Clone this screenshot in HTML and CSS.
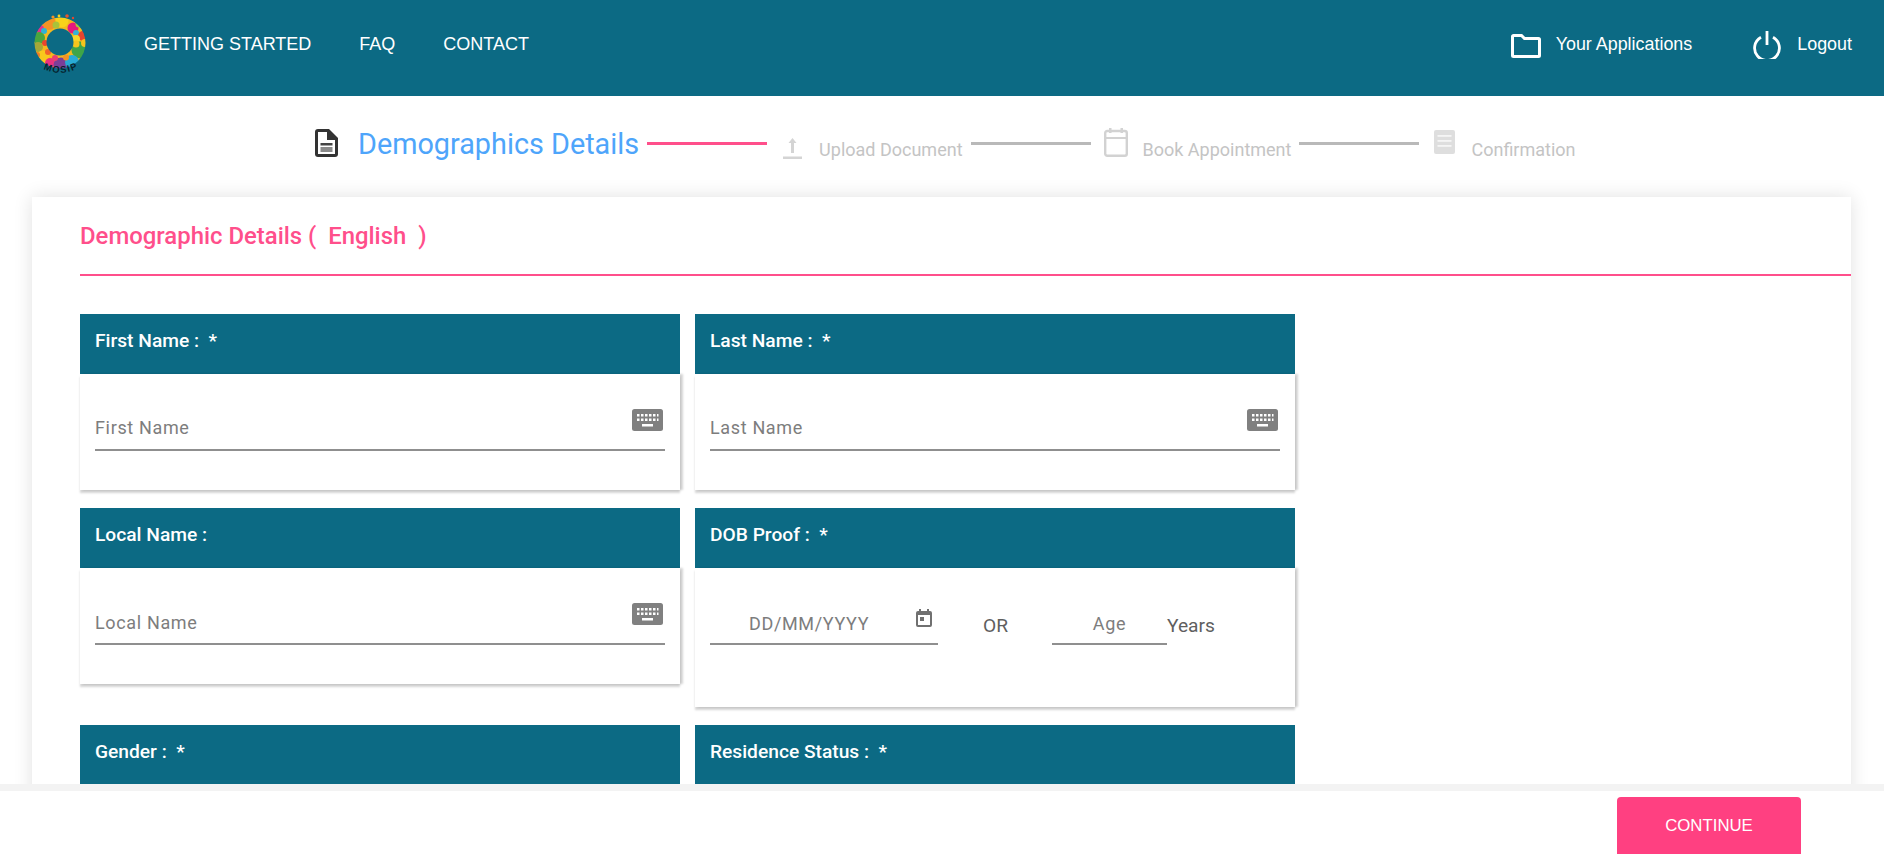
FILE: index.html
```html
<!DOCTYPE html>
<html lang="en">
<head>
<meta charset="utf-8">
<title>Demographic Details</title>
<link rel="stylesheet" href="styles.css">
</head>
<body>
<div class="app">
  <header class="topbar">
    <svg class="logo" width="60" height="66" viewBox="0 0 60 66" aria-label="MOSIP logo">
      <defs>
        <mask id="ring"><rect width="60" height="66" fill="#000"/><circle cx="30" cy="29" r="25.500" fill="#fff"/><circle cx="30" cy="28" r="13.500" fill="#000"/></mask>
        <path id="arc" d="M6 51 Q30 67 56 50"/>
      </defs>
      <g mask="url(#ring)">
        <circle cx="30" cy="29" r="26" fill="#f4b81f"/>
        <circle cx="19" cy="9" r="7" fill="#f39325"/>
        <circle cx="32" cy="7" r="6.500" fill="#f8d21a"/>
        <circle cx="26" cy="11" r="3.500" fill="#a9c23a"/>
        <circle cx="10" cy="15" r="4" fill="#e6318a"/>
        <circle cx="14" cy="17" r="3" fill="#2fb3d4"/>
        <circle cx="43" cy="14" r="5.500" fill="#e5197e"/>
        <circle cx="49" cy="10" r="3.500" fill="#9ccb3b"/>
        <circle cx="46" cy="19" r="3" fill="#35b4d6"/>
        <circle cx="53" cy="22" r="5" fill="#e8452e"/>
        <circle cx="46" cy="25" r="4" fill="#f7d82b"/>
        <circle cx="9" cy="24" r="6" fill="#4aa63f"/>
        <circle cx="15" cy="29" r="3" fill="#e8452e"/>
        <circle cx="8" cy="33" r="5" fill="#a5a738"/>
        <circle cx="50" cy="36" r="8.500" fill="#3fa548"/>
        <circle cx="46" cy="30" r="3.500" fill="#f6c51c"/>
        <circle cx="55" cy="29" r="4" fill="#f6c51c"/>
        <circle cx="13" cy="43" r="6.500" fill="#f8c81c"/>
        <circle cx="18" cy="38" r="3" fill="#f0642a"/>
        <circle cx="20" cy="49" r="5" fill="#e9327f"/>
        <circle cx="31" cy="51" r="7.500" fill="#7b3f98"/>
        <circle cx="42" cy="48" r="7" fill="#29abd6"/>
        <circle cx="25" cy="44" r="3" fill="#ea3f6e"/>
        <circle cx="36" cy="43.500" r="3" fill="#f39325"/>
        <circle cx="7" cy="41" r="3" fill="#ef7d22"/>
      </g>
      <circle cx="23" cy="3" r="1.600" fill="#f39325"/>
      <circle cx="29" cy="2" r="1.400" fill="#f8d21a"/>
      <circle cx="37" cy="2" r="1.800" fill="#e8552e"/>
      <circle cx="43" cy="4" r="1.200" fill="#e8452e"/>
      <text class="logo-text"><textPath href="#arc" startOffset="50%" text-anchor="middle">MOSIP</textPath></text>
    </svg>
    <nav class="nav">
      <a class="nav-link">GETTING STARTED</a>
      <a class="nav-link">FAQ</a>
      <a class="nav-link">CONTACT</a>
    </nav>
    <div class="actions">
      <a class="action action-apps">
        <svg class="icon-folder" width="30" height="24" viewBox="0 0 30 24"><path d="M1.500 2.500a1 1 0 0 1 1-1h8l3 3h14a1 1 0 0 1 1 1v16a1 1 0 0 1-1 1h-25a1 1 0 0 1-1-1z" fill="none" stroke="#fff" stroke-width="3"/></svg>
        <span>Your Applications</span>
      </a>
      <a class="action action-logout">
        <svg class="icon-power" width="28" height="28" viewBox="0 0 28 28"><path d="M8 6.200a12.400 12.400 0 1 0 12 0" fill="none" stroke="#fff" stroke-width="2.800"/><path d="M14 0v14" stroke="#fff" stroke-width="2.800"/></svg>
        <span>Logout</span>
      </a>
    </div>
  </header>

  <div class="content">
    <div class="stepper">
      <svg class="step-icon step-icon-doc" width="23" height="28" viewBox="0 0 23 28"><path d="M3 0h11l9 9v16a3 3 0 0 1-3 3H3a3 3 0 0 1-3-3V3a3 3 0 0 1 3-3z" fill="#333"/><path d="M3 3h9v8h8v14H3z" fill="#fff"/><rect x="5.500" y="14" width="12" height="2.500" fill="#444"/><rect x="5.500" y="18" width="12" height="5" fill="#8a8a8a"/></svg>
      <span class="step-active">Demographics Details</span>
      <span class="step-line step-line-active"></span>
      <svg class="step-icon step-icon-upload" width="19" height="22" viewBox="0 0 19 22"><path d="M9.500 1l4 5h-2.500v10H8V6H5.500z" fill="#d4d4d4"/><rect y="19.500" width="19" height="2.500" fill="#d4d4d4"/></svg>
      <span class="step-text step-text-upload">Upload Document</span>
      <span class="step-line"></span>
      <svg class="step-icon step-icon-cal" width="24" height="29" viewBox="0 0 24 29"><rect x="1.200" y="3" width="21.600" height="24.800" rx="2" fill="none" stroke="#d2d2d2" stroke-width="2.400"/><rect x="1" y="9" width="22" height="2" fill="#d2d2d2"/><rect x="5" width="2.500" height="5" fill="#d2d2d2"/><rect x="16.500" width="2.500" height="5" fill="#d2d2d2"/></svg>
      <span class="step-text step-text-book">Book Appointment</span>
      <span class="step-line"></span>
      <svg class="step-icon step-icon-conf" width="21" height="24" viewBox="0 0 21 24"><rect width="21" height="24" rx="2" fill="#dedede"/><rect x="3.500" y="5" width="14" height="1.800" fill="#f5f5f5"/><rect x="3.500" y="10" width="14" height="1.800" fill="#f5f5f5"/><rect x="3.500" y="15" width="14" height="1.800" fill="#f5f5f5"/></svg>
      <span class="step-text step-text-conf">Confirmation</span>
    </div>

    <main class="sheet">
      <h1 class="sheet-title">Demographic Details (&nbsp; English &nbsp;)</h1>
      <div class="grid">
        <section class="card">
          <h2 class="card-head">First Name : &nbsp;*</h2>
          <div class="card-body">
            <div class="field">
              <span class="placeholder">First Name</span>
              <svg class="kbd" width="31" height="22" viewBox="0 0 31 22"><rect width="31" height="22" rx="2.500" fill="#808080"/><path d="M5 5h2.500v2.500H5zM9 5h2.500v2.500H9zM13 5h2.500v2.500H13zM17 5h2.500v2.500H17zM21 5h2.500v2.500H21zM25 5h1.500v2.500H25zM5 9.500h2.500V12H5zM9 9.500h2.500V12H9zM13 9.500h2.500V12H13zM17 9.500h2.500V12H17zM21 9.500h2.500V12H21zM25 9.500h1.500V12H25zM10 15h11v2.500H10z" fill="#fff"/></svg>
            </div>
          </div>
        </section>
        <section class="card">
          <h2 class="card-head">Last Name : &nbsp;*</h2>
          <div class="card-body">
            <div class="field">
              <span class="placeholder">Last Name</span>
              <svg class="kbd" width="31" height="22" viewBox="0 0 31 22"><rect width="31" height="22" rx="2.500" fill="#808080"/><path d="M5 5h2.500v2.500H5zM9 5h2.500v2.500H9zM13 5h2.500v2.500H13zM17 5h2.500v2.500H17zM21 5h2.500v2.500H21zM25 5h1.500v2.500H25zM5 9.500h2.500V12H5zM9 9.500h2.500V12H9zM13 9.500h2.500V12H13zM17 9.500h2.500V12H17zM21 9.500h2.500V12H21zM25 9.500h1.500V12H25zM10 15h11v2.500H10z" fill="#fff"/></svg>
            </div>
          </div>
        </section>
        <section class="card card-top">
          <h2 class="card-head">Local Name :</h2>
          <div class="card-body">
            <div class="field field-local">
              <span class="placeholder">Local Name</span>
              <svg class="kbd" width="31" height="22" viewBox="0 0 31 22"><rect width="31" height="22" rx="2.500" fill="#808080"/><path d="M5 5h2.500v2.500H5zM9 5h2.500v2.500H9zM13 5h2.500v2.500H13zM17 5h2.500v2.500H17zM21 5h2.500v2.500H21zM25 5h1.500v2.500H25zM5 9.500h2.500V12H5zM9 9.500h2.500V12H9zM13 9.500h2.500V12H13zM17 9.500h2.500V12H17zM21 9.500h2.500V12H21zM25 9.500h1.500V12H25zM10 15h11v2.500H10z" fill="#fff"/></svg>
            </div>
          </div>
        </section>
        <section class="card card-top">
          <h2 class="card-head">DOB Proof : &nbsp;*</h2>
          <div class="card-body card-body-dob">
            <div class="dob-row">
              <div class="field field-date">
                <span class="placeholder">DD/MM/YYYY</span>
                <svg class="cal" width="16" height="18" viewBox="0 0 16 18"><path d="M3 0h2v2h6V0h2v2h1a2 2 0 0 1 2 2v12a2 2 0 0 1-2 2H2a2 2 0 0 1-2-2V4a2 2 0 0 1 2-2h1zM2 6v10h12V6z" fill="#707070" fill-rule="evenodd"/><rect x="4" y="8" width="4" height="4" fill="#707070"/></svg>
              </div>
              <span class="dob-or">OR</span>
              <div class="field field-age"><span class="placeholder">Age</span></div>
              <span class="dob-years">Years</span>
            </div>
          </div>
        </section>
        <section class="card">
          <h2 class="card-head">Gender : &nbsp;*</h2>
        </section>
        <section class="card">
          <h2 class="card-head">Residence Status : &nbsp;*</h2>
        </section>
      </div>
    </main>
  </div>

  <footer class="footer">
    <button class="continue" type="button">CONTINUE</button>
  </footer>
</div>
</body>
</html>
```
FILE: styles.css
```css
* { box-sizing: border-box; }

html, body {
  margin: 0;
  height: 100%;
  overflow: hidden;
  background: #fff;
  font-family: "Roboto", sans-serif;
}

.app {
  height: 100vh;
  display: flex;
  flex-direction: column;
}

/* Top bar */
.topbar {
  flex: none;
  height: 96px;
  background: #0c6a84;
  display: flex;
  align-items: center;
  color: #fff;
  font-family: "Liberation Sans", Arial, sans-serif;
  font-size: 18px;
  padding-left: 30px;
}

.logo { flex: none; margin-top: -2px; }

.logo-text {
  font-family: "Liberation Sans", Arial, sans-serif;
  font-size: 9.500px;
  font-weight: 700;
  letter-spacing: 1.200px;
  fill: #06222c;
}

.nav {
  display: flex;
  gap: 48px;
  margin-left: 54px;
  margin-top: -8px;
}

.nav-link { color: #fff; }

.actions {
  margin-left: auto;
  display: flex;
  align-items: center;
  padding-right: 32px;
  margin-top: -8px;
  gap: 61px;
  font-size: 17.900px;
}

.action {
  display: flex;
  align-items: center;
  gap: 15px;
}

.action-logout { gap: 16px; }

.icon-folder { margin-top: 3px; }
.icon-power { margin-top: 1px; }

/* Stepper */
.content {
  flex: 1;
  min-height: 0;
  overflow: hidden;
}

.stepper {
  height: 101px;
  display: flex;
  align-items: flex-start;
  padding-left: 315px;
}

.step-icon {
  flex: none;
  filter: blur(0.4px);
}

.step-icon-doc { margin: 33px 20px 0 0; }
.step-icon-upload { margin: 41px 17px 0 16px; }
.step-icon-cal { margin: 32px 15px 0 5px; }
.step-icon-conf { margin: 34px 16px 0 7px; }

.step-active {
  font-size: 28.800px;
  line-height: 34px;
  color: #4ea5fb;
  margin-top: 31px;
  white-space: nowrap;
}

.step-text {
  font-size: 18px;
  line-height: 22px;
  color: #c4c4c4;
  margin-top: 43px;
  white-space: nowrap;
}

.step-line {
  flex: none;
  width: 120px;
  height: 3px;
  margin: 46px 8px 0 8px;
  background: #b9b9b9;
}

.step-line-active {
  background: #ff4f8b;
  margin-right: 0;
}

/* Sheet */
.sheet {
  margin: 0 33px 0 32px;
  padding: 0 0 40px 48px;
  background: #fff;
  box-shadow: 0 0 18px rgba(0, 0, 0, 0.12);
}

.sheet-title {
  margin: 0;
  height: 79px;
  padding-top: 24px;
  font-size: 23.900px;
  line-height: 30px;
  font-weight: 500;
  color: #ff4f8b;
  border-bottom: 2px solid #ff4f8b;
}

.grid {
  display: grid;
  grid-template-columns: 600px 600px;
  column-gap: 15px;
  align-items: start;
  padding-top: 38px;
}

.card-top { margin-top: 18px; }
.card-top ~ .card:not(.card-top) { margin-top: 18px; }

.card-head {
  margin: 0;
  height: 60px;
  padding: 16px 15px 0;
  background: #0c6a84;
  color: #fff;
  font-size: 19.200px;
  line-height: 22px;
  font-weight: 500;
}

.card-body {
  height: 116px;
  padding: 26px 15px 0;
  background: #fff;
  box-shadow: 0 3px 2px rgba(0, 0, 0, 0.17), 3px 0 2px rgba(0, 0, 0, 0.17);
}

.card-body-dob {
  height: 139px;
  padding-top: 0;
}

.field {
  height: 51px;
  display: flex;
  justify-content: space-between;
  align-items: flex-start;
  border-bottom: 2px solid #8f8f8f;
}

.placeholder {
  font-size: 18px;
  line-height: 22px;
  color: #7d7d7d;
  letter-spacing: 0.650px;
  margin-top: 17px;
  white-space: nowrap;
}

.field-local .placeholder { margin-top: 18px; }

.kbd {
  flex: none;
  margin: 9px 2px 0 0;
}

.dob-row {
  display: flex;
  align-items: flex-end;
  height: 77px;
}

.field-date {
  width: 228px;
  padding-left: 39px;
  padding-right: 6px;
}

.field-date .placeholder { margin-top: 19px; }

.cal { flex: none; margin-top: 15px; }

.dob-or,
.dob-years {
  font-size: 19.200px;
  line-height: 22px;
  color: #5f5f5f;
}

.dob-or { margin: 0 44px 8px 45px; }

.dob-years { margin: 0 0 8px 0; }

.field-age {
  width: 115px;
  justify-content: center;
}

.field-age .placeholder { margin-top: 19px; }

/* Footer */
.footer {
  flex: none;
  height: 70px;
  overflow: hidden;
  background: #fff;
  border-top: 7px solid #f3f3f3;
  padding: 6px 83px 0 0;
  display: flex;
  justify-content: flex-end;
  align-items: flex-start;
}

.continue {
  width: 184px;
  height: 57px;
  border: 0;
  border-radius: 4px 4px 0 0;
  background: #ff4081;
  color: #fff;
  font-family: "Liberation Sans", Arial, sans-serif;
  font-size: 16.800px;
}
```
